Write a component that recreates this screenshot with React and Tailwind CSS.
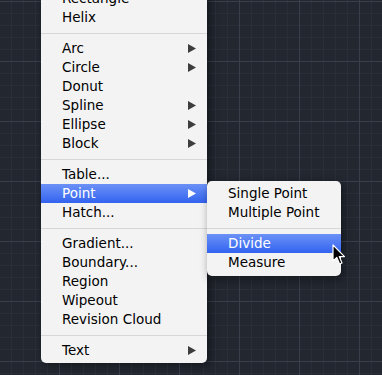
const mainItems = [
  { label: "Rectangle" },
  { label: "Helix" },
  { sep: true },
  { label: "Arc", sub: true },
  { label: "Circle", sub: true },
  { label: "Donut" },
  { label: "Spline", sub: true },
  { label: "Ellipse", sub: true },
  { label: "Block", sub: true },
  { sep: true },
  { label: "Table..." },
  { label: "Point", sub: true, active: true },
  { label: "Hatch..." },
  { sep: true },
  { label: "Gradient..." },
  { label: "Boundary..." },
  { label: "Region" },
  { label: "Wipeout" },
  { label: "Revision Cloud" },
  { sep: true },
  { label: "Text", sub: true },
];

const pointItems = [
  { label: "Single Point" },
  { label: "Multiple Point" },
  { sep: true },
  { label: "Divide", active: true },
  { label: "Measure" },
];

function Arrow({ light }) {
  return (
    <svg width="8" height="9" viewBox="0 0 8 9" className="shrink-0">
      <path d="M0 0 L8 4.5 L0 9 Z" fill={light ? "#ffffff" : "#3d3d3d"} />
    </svg>
  );
}

function MenuRows({ items }) {
  return items.map((it, i) =>
    it.sep ? (
      <div key={i} className="mt-[6px] mb-[5px] h-px bg-[#d7d7d7]" />
    ) : (
      <div
        key={i}
        className={
          "flex h-[19px] items-center justify-between pl-[21px] pr-[11px] " +
          (it.active
            ? "bg-gradient-to-b from-[#6c91f6] to-[#3262ef] text-white"
            : "text-black")
        }
      >
        <span>{it.label}</span>
        {it.sub && <Arrow light={it.active} />}
      </div>
    )
  );
}

function Cursor() {
  return (
    <svg width="14" height="22" viewBox="0 0 14 22" className="absolute left-[332px] top-[244px]">
      <path
        d="M1 1 L1 17 L4.8 13.4 L7.6 20 L10 19 L7.3 12.6 L12.5 12.6 Z"
        fill="#000"
        stroke="#fff"
        strokeWidth="1.2"
        strokeLinejoin="round"
      />
    </svg>
  );
}

export default function App() {
  return (
    <div
      className="relative h-[375px] w-[382px] overflow-hidden bg-[#222730] bg-[image:linear-gradient(90deg,transparent_59px,#383e4a_59px,#383e4a_60px,transparent_60px),linear-gradient(180deg,transparent_1px,#383e4a_1px,#383e4a_2px,transparent_2px),linear-gradient(90deg,transparent_11px,#292e38_11px,#292e38_12px,transparent_12px),linear-gradient(180deg,transparent_1px,#292e38_1px,#292e38_2px,transparent_2px)] bg-[length:60px_60px,60px_60px,12px_12px,12px_12px] text-[13.5px] leading-none"
      style={{ fontFamily: '"DejaVu Sans", Verdana, sans-serif' }}
    >
      <div className="ml-[41px] mt-[-11px] w-[166px] rounded-b-[5px] bg-[#f3f3f3] pb-[3px] shadow-[3px_2px_8px_rgba(0,0,0,0.45)]">
        <MenuRows items={mainItems} />
      </div>

      <div className="absolute left-[207px] top-[181px] w-[134px] rounded-[5px] bg-[#f3f3f3] pt-[3px] pb-[4px] shadow-[2px_3px_8px_rgba(0,0,0,0.45)]">
        <MenuRows items={pointItems} />
      </div>

      <Cursor />
    </div>
  );
}
